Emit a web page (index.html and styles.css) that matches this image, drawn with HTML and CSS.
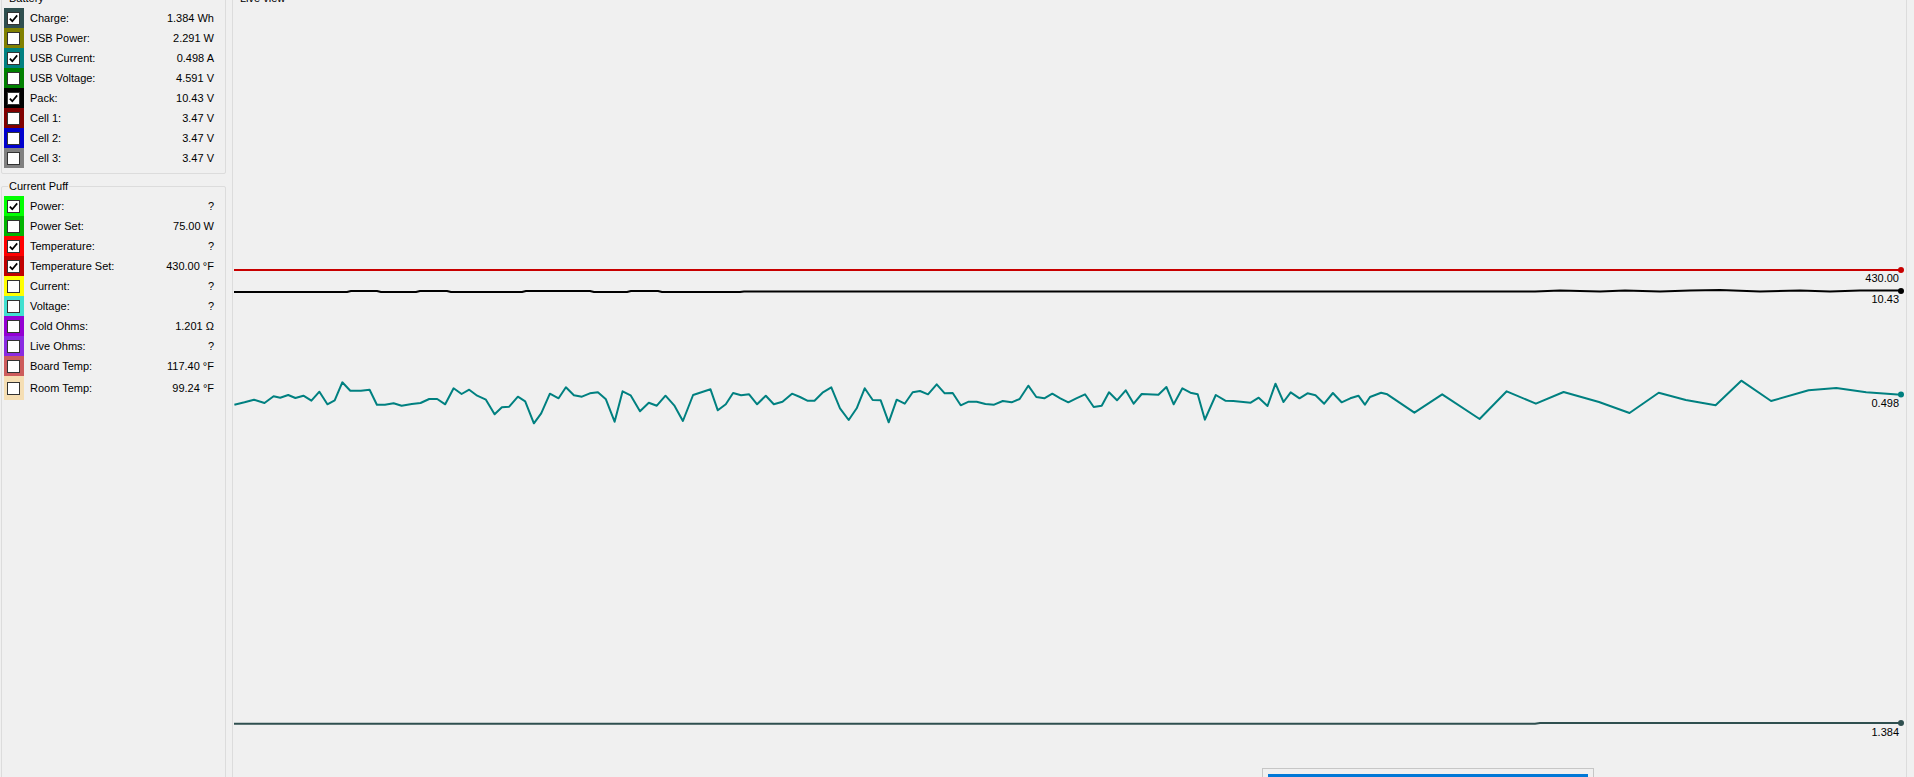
FILE: index.html
```html
<!DOCTYPE html>
<html>
<head>
<meta charset="utf-8">
<title>Live view</title>
<link rel="stylesheet" href="styles.css">
</head>
<body>
<div class="app">
  <div class="side">
    <div class="group battery">
      <span class="gtitle">Battery</span>
      <div class="row"><span class="sw c-charge"><span class="cb"><svg viewBox="0 0 11 11"><path d="M1.8 5.6 L4.3 8.2 L9.2 2.4"/></svg></span></span><span class="lbl">Charge:</span><span class="val">1.384 Wh</span></div>
      <div class="row"><span class="sw c-usbp"><span class="cb"></span></span><span class="lbl">USB Power:</span><span class="val">2.291 W</span></div>
      <div class="row"><span class="sw c-usbc"><span class="cb"><svg viewBox="0 0 11 11"><path d="M1.8 5.6 L4.3 8.2 L9.2 2.4"/></svg></span></span><span class="lbl">USB Current:</span><span class="val">0.498 A</span></div>
      <div class="row"><span class="sw c-usbv"><span class="cb"></span></span><span class="lbl">USB Voltage:</span><span class="val">4.591 V</span></div>
      <div class="row"><span class="sw c-pack"><span class="cb"><svg viewBox="0 0 11 11"><path d="M1.8 5.6 L4.3 8.2 L9.2 2.4"/></svg></span></span><span class="lbl">Pack:</span><span class="val">10.43 V</span></div>
      <div class="row"><span class="sw c-cell1"><span class="cb"></span></span><span class="lbl">Cell 1:</span><span class="val">3.47 V</span></div>
      <div class="row"><span class="sw c-cell2"><span class="cb"></span></span><span class="lbl">Cell 2:</span><span class="val">3.47 V</span></div>
      <div class="row"><span class="sw c-cell3"><span class="cb"></span></span><span class="lbl">Cell 3:</span><span class="val">3.47 V</span></div>
    </div>
    <div class="group puff">
      <span class="gtitle">Current Puff</span>
      <div class="row"><span class="sw c-power"><span class="cb"><svg viewBox="0 0 11 11"><path d="M1.8 5.6 L4.3 8.2 L9.2 2.4"/></svg></span></span><span class="lbl">Power:</span><span class="val">?</span></div>
      <div class="row"><span class="sw c-powerset"><span class="cb"></span></span><span class="lbl">Power Set:</span><span class="val">75.00 W</span></div>
      <div class="row"><span class="sw c-temp"><span class="cb"><svg viewBox="0 0 11 11"><path d="M1.8 5.6 L4.3 8.2 L9.2 2.4"/></svg></span></span><span class="lbl">Temperature:</span><span class="val">?</span></div>
      <div class="row"><span class="sw c-tempset"><span class="cb"><svg viewBox="0 0 11 11"><path d="M1.8 5.6 L4.3 8.2 L9.2 2.4"/></svg></span></span><span class="lbl">Temperature Set:</span><span class="val">430.00 °F</span></div>
      <div class="row"><span class="sw c-current"><span class="cb"></span></span><span class="lbl">Current:</span><span class="val">?</span></div>
      <div class="row"><span class="sw c-voltage"><span class="cb"></span></span><span class="lbl">Voltage:</span><span class="val">?</span></div>
      <div class="row"><span class="sw c-cold"><span class="cb"></span></span><span class="lbl">Cold Ohms:</span><span class="val">1.201 Ω</span></div>
      <div class="row"><span class="sw c-live"><span class="cb"></span></span><span class="lbl">Live Ohms:</span><span class="val">?</span></div>
      <div class="row"><span class="sw c-board"><span class="cb"></span></span><span class="lbl">Board Temp:</span><span class="val">117.40 °F</span></div>
      <div class="row last"><span class="sw c-room"><span class="cb"></span></span><span class="lbl">Room Temp:</span><span class="val">99.24 °F</span></div>
    </div>
  </div>
  <div class="group live">
    <span class="gtitle">Live view</span>
    <svg class="plot" viewBox="233 -1 1673 790" width="1673" height="790">
      <path class="ln red" d="M234 270 H1901"/>
      <path class="ln black" d="M234 292 H347 L351 291 H377 L381 292 H416 L420 291 H447 L451 292 H522 L526 291 H590 L594 292 H627 L631 291 H658 L662 292 H740 L744 291.5 H1535 L1560 290.5 L1600 291.5 L1625 290.5 L1660 291.5 L1690 290.5 L1720 290 L1760 291.5 L1800 290.5 L1830 291.5 L1860 290.5 L1901 290.5"/>
      <polyline class="ln teal" points="234.4,404.7 244.5,402.3 254,399.7 264.5,403 273.6,396.3 280.2,397.7 288.2,395 295.4,398 303.4,395.7 311.4,400.7 319.4,391.7 327.4,404.3 334.7,400.3 342.3,382.3 350.3,390.7 360.9,390.7 369.6,389.7 376.9,404.7 384.9,404.7 393.6,403.3 401.6,405.7 411.8,404 420.5,403 429.2,399 437.2,399 445.2,404.3 453.6,388.3 461.6,394 469.2,389.7 477.2,395.7 485.9,399.7 494.6,414.3 501.9,407.3 509.2,406.7 517.9,396.7 525.2,401.3 533.9,423.3 541.2,413.3 549.9,393.7 558.6,398.3 565.9,387.3 573.9,395.3 581.9,396.7 589.9,393.3 597.9,392.3 605.9,399.3 614.6,421.7 622.6,391.3 630.6,395.3 640,411.3 648.8,402.7 656.8,405.7 665.5,395.7 674.2,405.3 682.9,421 693.1,395 710.5,389.3 717.8,410.3 725.8,404.3 733.1,393 741.1,395.3 749.1,394.3 757.1,404.3 765.8,395.7 773.8,404.3 782.5,401.7 792,393.7 800,397 807.3,400.7 814.5,400.7 822.5,392.7 831.3,387.3 840,408.3 848.7,420 856.7,408.3 864.7,388.3 872.7,400 880.7,400.3 888.7,422.3 896.7,399.7 904.7,403.7 912.7,392.3 920,391 928,394.3 936.7,384.3 944.7,393.3 952.7,393 960.7,405.3 968.7,401.7 976.7,401.7 985.4,404 994.1,404.7 1002.8,401 1011.6,402.3 1019.6,399 1028.3,385.7 1036.3,397 1044.3,398.3 1052.3,393.7 1060.3,398.3 1068.3,402.3 1076.3,398.3 1085,394.3 1093.7,407 1101.7,405.7 1109,392.3 1117,400.3 1125.7,390.3 1133.7,403.7 1141.7,394 1158.4,394.7 1166.4,387 1173.7,404.3 1182.4,388.3 1190.4,392.7 1197.7,394.3 1204.9,419.7 1215.8,395 1225.3,400.7 1233.3,401 1250.7,402.7 1258.7,397.7 1267.5,406 1275.5,383.7 1283.5,402 1290.7,392.3 1299.5,398.3 1307.5,393.3 1315.5,395.3 1324.2,403.7 1332.9,393 1341.6,402.3 1350.3,398.3 1358.4,395.7 1364.9,404.7 1370,397 1381.1,392.7 1387.3,394.3 1414.4,412.7 1442.2,394.3 1479.6,419 1506.7,391.3 1535.9,403.7 1563.6,392 1599,402 1629.5,413 1658.7,392.7 1685.8,400 1715.6,405.3 1741.3,380.7 1771.1,401 1808.6,390.3 1836.3,388 1866.2,392.3 1900.9,394.7"/>
      <path class="ln slate" d="M234 723.7 H1535 L1540 723 H1901"/>
      <circle class="dot d-red" cx="1901" cy="270" r="3"/>
      <circle class="dot d-black" cx="1901" cy="291" r="3"/>
      <circle class="dot d-teal" cx="1901" cy="394.5" r="3"/>
      <circle class="dot d-slate" cx="1901" cy="723" r="3"/>
      <text class="vl" x="1899" y="281.5">430.00</text>
      <text class="vl" x="1899" y="302.5">10.43</text>
      <text class="vl" x="1899" y="406.5">0.498</text>
      <text class="vl" x="1899" y="736">1.384</text>
    </svg>
  </div>
</div>
<div class="progress"><div class="fill"></div></div>
</body>
</html>
```
FILE: styles.css
```css
* { box-sizing: border-box; }
html, body { margin: 0; padding: 0; }
body {
  background: #f0f0f0;
  font-family: "Liberation Sans", Arial, sans-serif;
  font-size: 11px;
  color: #000;
  width: 1914px;
  height: 777px;
  overflow: hidden;
  position: relative;
}
.app {
  display: flex;
  height: 800px;
  margin-top: -2px;
}
.side {
  width: 232px;
  flex: none;
  display: flex;
  flex-direction: column;
}
.group {
  border: 1px solid #dcdcdc;
  border-radius: 2px;
  position: relative;
}
.gtitle {
  position: absolute;
  top: -7px;
  left: 6px;
  padding: 0 1px;
  line-height: 13px;
  background: #f0f0f0;
  white-space: nowrap;
}
.battery {
  margin-left: 1px;
  width: 225px;
  padding: 9px 11px 5px 2px;
}
.puff {
  margin: 12px 0 0 1px;
  width: 225px;
  flex: 1;
  padding: 9px 11px 0 2px;
}
.row {
  display: flex;
  align-items: center;
  height: 20px;
}
.row.last { height: 24px; }
.sw {
  width: 20px;
  height: 100%;
  flex: none;
  display: flex;
  align-items: center;
  padding-left: 3px;
}
.cb {
  width: 13px;
  height: 13px;
  border: 1px solid #333;
  background: #fff;
  display: block;
}
.cb svg {
  display: block;
  width: 11px;
  height: 11px;
}
.cb path {
  fill: none;
  stroke: #000;
  stroke-width: 1.7;
}
.lbl {
  margin-left: 6px;
  flex: 1;
  white-space: nowrap;
}
.val {
  white-space: nowrap;
  text-align: right;
}
.c-charge { background: #2f4f4f; }
.c-usbp { background: #808000; }
.c-usbc { background: #008080; }
.c-usbv { background: #008000; }
.c-pack { background: #000000; }
.c-cell1 { background: #800000; }
.c-cell2 { background: #0000cd; }
.c-cell3 { background: #808080; }
.c-power { background: #00ff00; }
.c-powerset { background: #00b400; }
.c-temp { background: #ff0000; }
.c-tempset { background: #c00000; }
.c-current { background: #ffff00; }
.c-voltage { background: #40e0d0; }
.c-cold { background: #9400d3; }
.c-live { background: #8a2be2; }
.c-board { background: #cd5c5c; }
.c-room { background: #f5deb3; }

.live {
  width: 1675px;
  flex: none;
  height: 800px;
}
.live .gtitle { left: 6px; }
.plot {
  display: block;
}
.ln {
  fill: none;
  stroke-width: 2;
  stroke-linejoin: round;
}
.red { stroke: #c80000; }
.black { stroke: #000; }
.teal { stroke: #008080; }
.slate { stroke: #2f4f4f; }
.dot { stroke: none; }
.d-red { fill: #c80000; }
.d-black { fill: #000; }
.d-teal { fill: #008080; }
.d-slate { fill: #2f4f4f; }
.vl {
  font-family: "Liberation Sans", Arial, sans-serif;
  font-size: 11px;
  fill: #000;
  text-anchor: end;
}
.progress {
  position: absolute;
  left: 1262px;
  top: 768px;
  width: 332px;
  height: 24px;
  border: 1px solid #c6c6c6;
  background: #f0f0f0;
  padding: 5px 5px 0 5px;
}
.progress .fill {
  height: 12px;
  background: #0078d7;
}
```
